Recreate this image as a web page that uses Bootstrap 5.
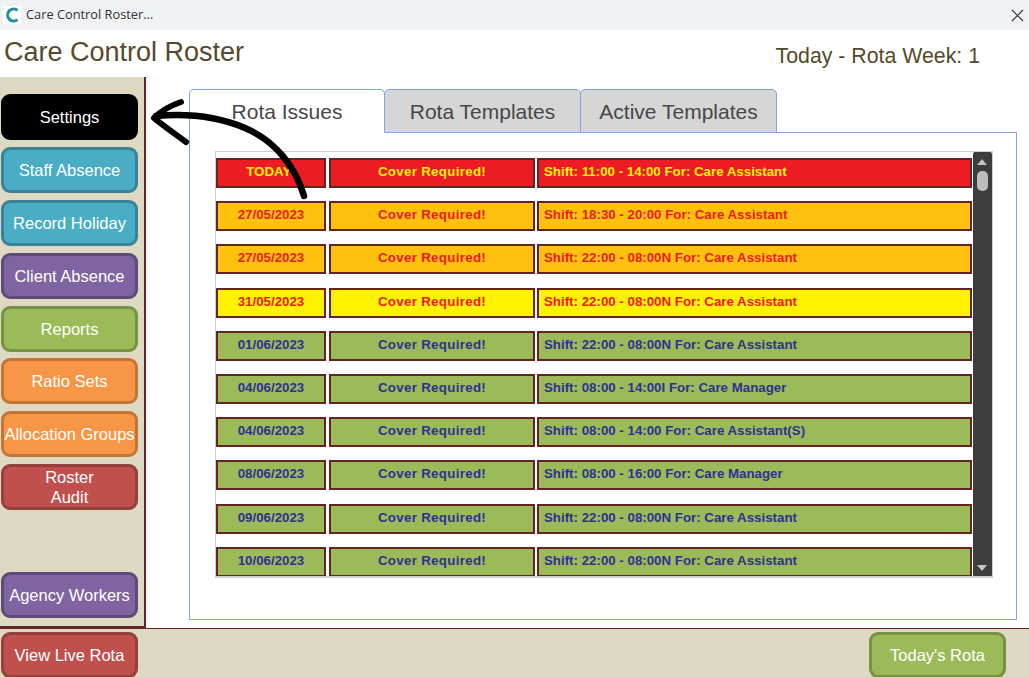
<!DOCTYPE html>
<html lang="en">
<head>
<meta charset="utf-8">
<title>Care Control Roster</title>
<link href="https://cdn.jsdelivr.net/npm/bootstrap@5.3.0/dist/css/bootstrap.min.css" rel="stylesheet">
<style>
html,body{height:677px;overflow:hidden;background:#fff}
body{font-family:"Liberation Sans",Arial,sans-serif;color:#4a3f24;position:relative}
.winbar{height:30px;background:#f0f1f4;padding-left:3px;font-family:"Open Sans","Noto Sans",sans-serif;font-size:12.8px;color:#333}
.winlogo{width:18px;height:18px;background:#fff;margin-right:5px}
.winclose{margin-right:5px}
.headrow{height:47px}
.apptitle{font-size:27px;line-height:30px;padding:7px 0 0 4px;color:#574a2c}
.weekinfo{font-size:21.3px;line-height:24px;padding:14px 49px 0 0;color:#574a2c}
.middle{height:551px}
.sidepane{width:146px;background:#ddd9c3;border-right:2px solid #632423;border-bottom:2px solid #632423;padding:17px 6px 0 1px}
.sidebtn{display:flex;align-items:center;justify-content:center;text-align:center;width:137px;height:46px;border-radius:9px;border:3px solid;color:#fff;font-size:16.5px;line-height:20px;padding:0;margin-bottom:6.9px;white-space:nowrap}
.sidebtn.spacer-top{margin-top:62px}
.b-black{background:#000;border-color:#000}
.b-teal{background:#4bacc6;border-color:#3a8296}
.b-purple{background:#8064a2;border-color:#5f4a7a}
.b-green{background:#9bbb59;border-color:#789244}
.b-orange{background:#f79646;border-color:#c27536}
.b-red{background:#c0504d;border-color:#94403c}
.mainpane{padding:12px 12px 0 43px;flex:1;min-width:0}
.tabrow{height:44px;position:relative;z-index:1}
.tabitem{width:197px;height:44px;background:#d6d6d6;border:1px solid #7da7de;border-radius:5px 5px 0 0;font-size:21px;line-height:43px;text-align:center;color:#474747;margin-right:-1px;padding:0}
.tabitem.on{background:#fff;border-bottom-color:#fff;width:196px;position:relative}
.tabpanel{height:488px;margin-top:-1px;border:1px solid #7da7de;background:#fff;padding:18px 24px 0 25px}
.issuelist{width:778px;height:427px;border:1px solid #cfcfcf;border-bottom-width:2px;overflow:hidden}
.issuerows{flex:1;min-width:0;padding:6px 0 0 0}
.issuerow{height:30px;margin-bottom:13.2px;gap:3px;font-size:13.3px;font-weight:700;line-height:24px}
.issuecell{border:2px solid #632423;height:30px;padding-bottom:2px}
.c1{width:110px;text-align:center}
.c2{width:206px;text-align:center;letter-spacing:.32px}
.c3{flex:1;padding-left:5px;margin-left:-1px}
.r-red .issuecell{background:#ed1c24;color:#fff200}
.r-amber .issuecell{background:#ffc10e;color:#ed1c24}
.r-yellow .issuecell{background:#fff200;color:#ed1c24}
.r-green .issuecell{background:#9bbb59;color:#2e3192}
.scrolltrack{width:19px;background:#3d3d3d;border-radius:4px;position:relative;margin:-1px 0 -2px 1px}
.scrollthumb{position:absolute;left:4px;top:20px;width:11px;height:20px;background:#bdbdbd;border-radius:5px}
.scrollup,.scrolldown{position:absolute;left:4px;width:0;height:0;border-left:5.5px solid transparent;border-right:5.5px solid transparent}
.scrollup{top:8px;border-bottom:6px solid #c4c4c4}
.scrolldown{bottom:7px;border-top:6px solid #c4c4c4}
.footbar{height:49px;background:#ddd9c3;border-top:1px solid #632423;padding:3px 23px 0 1px}
.footbar .sidebtn{margin:0;height:46px}
.arrowlayer{position:absolute;left:145px;top:95px;pointer-events:none;z-index:5}
</style>
</head>
<body>
<div class="winbar d-flex align-items-center">
  <span class="winlogo d-flex align-items-center justify-content-center">
    <svg width="15" height="16" viewBox="0 0 15 16"><path d="M12.5 3.4A6 6 0 1 0 12.5 12.6" fill="none" stroke="#1e8f9e" stroke-width="3"/></svg>
  </span>
  <span>Care Control Roster...</span>
  <svg class="winclose ms-auto" width="13" height="13" viewBox="0 0 13 13"><path d="M1 1L12 12M12 1L1 12" stroke="#333" stroke-width="1.1"/></svg>
</div>
<div class="headrow d-flex justify-content-between">
  <div class="apptitle">Care Control Roster</div>
  <div class="weekinfo">Today - Rota Week: 1</div>
</div>
<div class="middle d-flex">
  <div class="sidepane">
    <button class="sidebtn b-black">Settings</button>
    <button class="sidebtn b-teal">Staff Absence</button>
    <button class="sidebtn b-teal">Record Holiday</button>
    <button class="sidebtn b-purple">Client Absence</button>
    <button class="sidebtn b-green">Reports</button>
    <button class="sidebtn b-orange">Ratio Sets</button>
    <button class="sidebtn b-orange">Allocation Groups</button>
    <button class="sidebtn b-red">Roster<br>Audit</button>
    <button class="sidebtn b-purple spacer-top">Agency Workers</button>
  </div>
  <div class="mainpane">
    <div class="tabrow d-flex">
      <div class="tabitem on">Rota Issues</div>
      <div class="tabitem">Rota Templates</div>
      <div class="tabitem">Active Templates</div>
    </div>
    <div class="tabpanel">
      <div class="issuelist d-flex">
        <div class="issuerows">
          <div class="issuerow d-flex r-red"><div class="issuecell c1">TODAY!</div><div class="issuecell c2">Cover Required!</div><div class="issuecell c3">Shift: 11:00 - 14:00 For: Care Assistant</div></div>
          <div class="issuerow d-flex r-amber"><div class="issuecell c1">27/05/2023</div><div class="issuecell c2">Cover Required!</div><div class="issuecell c3">Shift: 18:30 - 20:00 For: Care Assistant</div></div>
          <div class="issuerow d-flex r-amber"><div class="issuecell c1">27/05/2023</div><div class="issuecell c2">Cover Required!</div><div class="issuecell c3">Shift: 22:00 - 08:00N For: Care Assistant</div></div>
          <div class="issuerow d-flex r-yellow"><div class="issuecell c1">31/05/2023</div><div class="issuecell c2">Cover Required!</div><div class="issuecell c3">Shift: 22:00 - 08:00N For: Care Assistant</div></div>
          <div class="issuerow d-flex r-green"><div class="issuecell c1">01/06/2023</div><div class="issuecell c2">Cover Required!</div><div class="issuecell c3">Shift: 22:00 - 08:00N For: Care Assistant</div></div>
          <div class="issuerow d-flex r-green"><div class="issuecell c1">04/06/2023</div><div class="issuecell c2">Cover Required!</div><div class="issuecell c3">Shift: 08:00 - 14:00I For: Care Manager</div></div>
          <div class="issuerow d-flex r-green"><div class="issuecell c1">04/06/2023</div><div class="issuecell c2">Cover Required!</div><div class="issuecell c3">Shift: 08:00 - 14:00 For: Care Assistant(S)</div></div>
          <div class="issuerow d-flex r-green"><div class="issuecell c1">08/06/2023</div><div class="issuecell c2">Cover Required!</div><div class="issuecell c3">Shift: 08:00 - 16:00 For: Care Manager</div></div>
          <div class="issuerow d-flex r-green"><div class="issuecell c1">09/06/2023</div><div class="issuecell c2">Cover Required!</div><div class="issuecell c3">Shift: 22:00 - 08:00N For: Care Assistant</div></div>
          <div class="issuerow d-flex r-green"><div class="issuecell c1">10/06/2023</div><div class="issuecell c2">Cover Required!</div><div class="issuecell c3">Shift: 22:00 - 08:00N For: Care Assistant</div></div>
        </div>
        <div class="scrolltrack"><span class="scrollup"></span><span class="scrollthumb"></span><span class="scrolldown"></span></div>
      </div>
    </div>
  </div>
</div>
<div class="footbar d-flex justify-content-between">
  <button class="sidebtn b-red">View Live Rota</button>
  <button class="sidebtn b-green">Today's Rota</button>
</div>
<svg class="arrowlayer" width="170" height="110" viewBox="145 95 170 110">
  <path d="M304 196C296 168 276 141 245 128C219 117 190 113 156 116" fill="none" stroke="#000" stroke-width="6.5" stroke-linecap="round"/>
  <path d="M181 102C172 105 162 110 154 118C161 124 171 131 186 142" fill="none" stroke="#000" stroke-width="6" stroke-linecap="round" stroke-linejoin="round"/>
</svg>
<script src="https://cdn.jsdelivr.net/npm/bootstrap@5.3.0/dist/js/bootstrap.bundle.min.js"></script>
</body>
</html>
